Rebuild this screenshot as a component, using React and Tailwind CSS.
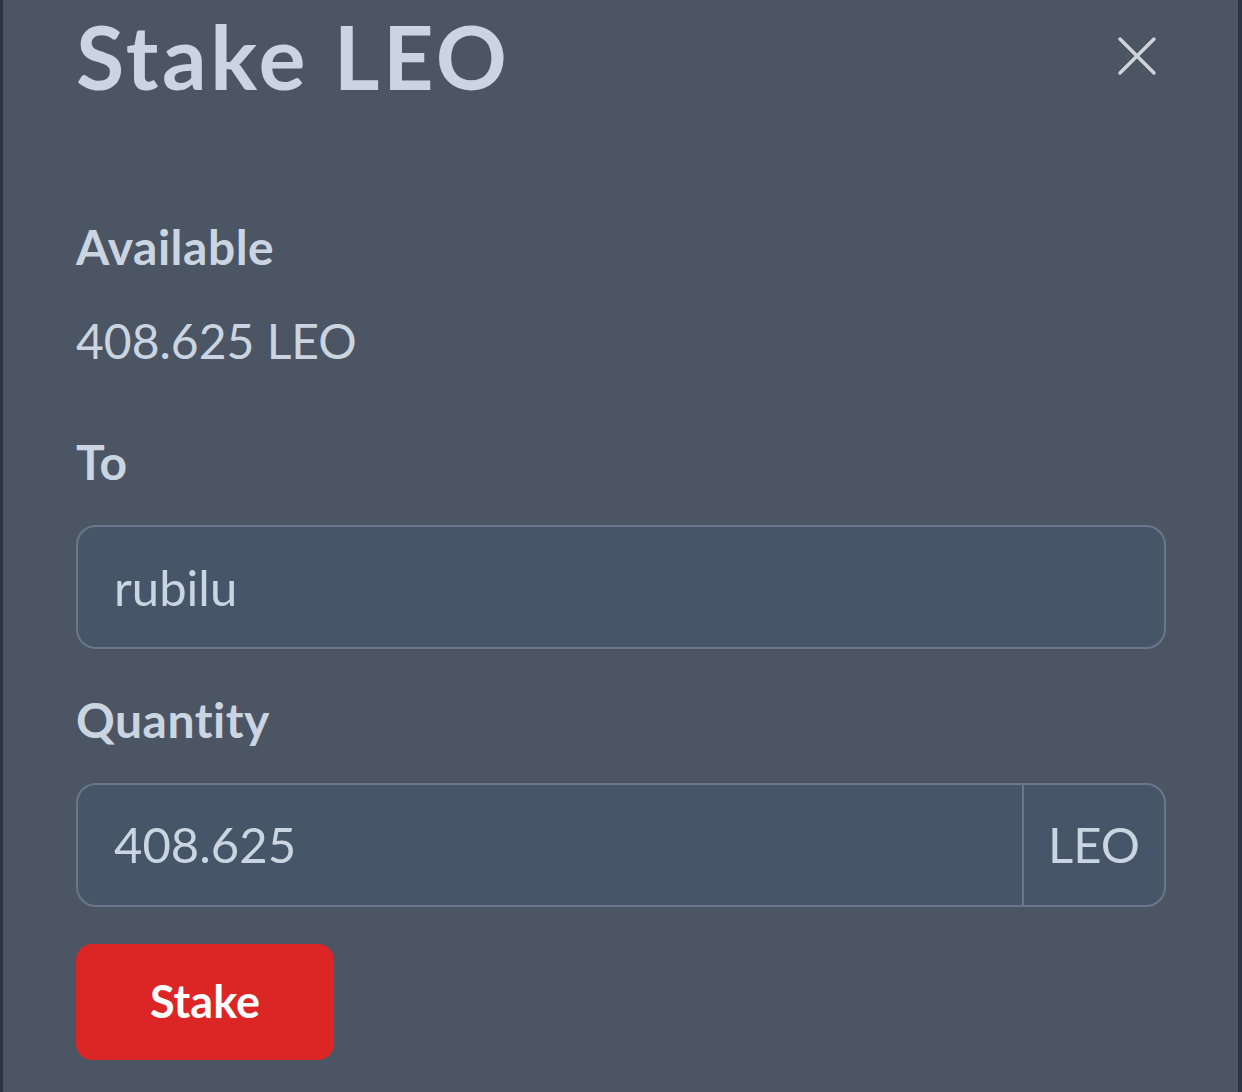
import React, {useState} from 'react';

const font = {fontFamily: 'Lato, "Noto Sans", sans-serif'};

const Label = ({children, className = ''}) => (
    <p className={`text-[48px] leading-[72px] font-bold tracking-[0.5px] text-[#cbd5e1] ${className}`}>{children}</p>
);

export default function App() {
    const [to, setTo] = useState('rubilu');
    const [qty, setQty] = useState('408.625');

    return (
        <div style={font}
             className="w-full h-[1092px] bg-[#4b5563] border-l-[3px] border-r-[4px] border-[#2b3442] overflow-hidden">
            <div className="pl-[73px] pr-[72px] flex flex-col">
                {/* Nagłówek */}
                <div className="h-[112px] flex items-center justify-between">
                    <h1 className="text-[88px] leading-[112px] font-bold tracking-[3.5px] text-[#cbd5e1]">Stake LEO</h1>
                    <button className="w-[56px] h-[56px] flex items-center justify-center text-[#d1d5db] mr-[1px]">
                        <svg width="40" height="40" viewBox="0 0 40 40" fill="none" stroke="currentColor"
                             strokeWidth="3.5" strokeLinecap="round">
                            <path d="M3 3 L37 37 M37 3 L3 37"/>
                        </svg>
                    </button>
                </div>

                <Label className="mt-[99px]">Available</Label>
                <p className="mt-[22px] text-[48px] leading-[72px] text-[#cbd5e1]">408.625 LEO</p>

                <Label className="mt-[49px]">To</Label>
                <input
                    value={to}
                    onChange={e => setTo(e.target.value)}
                    className="mt-[27px] h-[124px] w-full rounded-[20px] border-2 border-[#6b7789] bg-[#475569] px-[36px] text-[49px] text-[#cbd5e1] outline-none"
                />

                <Label className="mt-[35px]">Quantity</Label>
                <div className="mt-[27px] h-[124px] w-full flex rounded-[20px] border-2 border-[#6b7789] bg-[#475569] overflow-hidden">
                    <input
                        value={qty}
                        onChange={e => setQty(e.target.value)}
                        className="flex-1 min-w-0 bg-transparent px-[36px] text-[49px] text-[#cbd5e1] outline-none"
                    />
                    <div className="w-[142px] border-l-2 border-[#6b7789] flex items-center justify-center text-[49px] text-[#cbd5e1]">
                        LEO
                    </div>
                </div>

                <button className="mt-[37px] w-[258px] h-[116px] rounded-[16px] bg-[#dc2626] text-white text-[45px] font-bold">
                    Stake
                </button>
            </div>
        </div>
    );
}
